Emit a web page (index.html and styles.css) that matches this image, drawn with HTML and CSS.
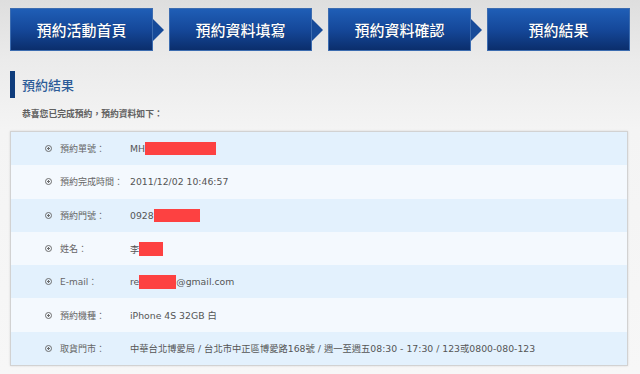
FILE: index.html
```html
<!DOCTYPE html>
<html lang="zh-Hant">
<head>
<meta charset="utf-8">
<title>預約結果</title>
<link rel="stylesheet" href="styles.css">
</head>
<body>
<nav class="steps">
  <div class="step arrow">預約活動首頁</div>
  <div class="step arrow">預約資料填寫</div>
  <div class="step arrow">預約資料確認</div>
  <div class="step">預約結果</div>
</nav>
<h1 class="title">預約結果</h1>
<p class="intro">恭喜您已完成預約，預約資料如下：</p>
<div class="box">
  <div class="row odd"><span class="ico"></span><span class="label">預約單號：</span><span class="value">MH<span class="redact r1"></span></span></div>
  <div class="row even"><span class="ico"></span><span class="label">預約完成時間：</span><span class="value">2011/12/02 10:46:57</span></div>
  <div class="row odd"><span class="ico"></span><span class="label">預約門號：</span><span class="value">0928<span class="redact r3"></span></span></div>
  <div class="row even"><span class="ico"></span><span class="label">姓名：</span><span class="value">李<span class="redact r4"></span></span></div>
  <div class="row odd"><span class="ico"></span><span class="label">E-mail：</span><span class="value">re<span class="redact r5"></span>@gmail.com</span></div>
  <div class="row even"><span class="ico"></span><span class="label">預約機種：</span><span class="value">iPhone 4S 32GB 白</span></div>
  <div class="row odd"><span class="ico"></span><span class="label">取貨門市：</span><span class="value">中華台北博愛局 / 台北市中正區博愛路168號 / 週一至週五08:30 - 17:30 / 123或0800-080-123</span></div>
</div>
</body>
</html>
```
FILE: styles.css
```css
html, body {
  margin: 0;
  padding: 0;
}
body {
  width: 640px;
  height: 374px;
  overflow: hidden;
  background: linear-gradient(#dedede 0px, #ebebeb 60px, #f4f4f4 130px, #f7f7f7 374px);
  font-family: "DejaVu Sans", "Noto Sans CJK TC", sans-serif;
}
.steps {
  display: flex;
  gap: 16px;
  padding: 8px 0 0 10px;
}
.step {
  position: relative;
  width: 143px;
  height: 43px;
  box-sizing: border-box;
  border: 1px solid #3c6cb0;
  background: linear-gradient(#1f5eb6, #15489a 50%, #0b2e6c);
  color: #fff;
  font-family: "Noto Sans CJK TC", sans-serif;
  font-size: 15px;
  font-weight: 500;
  display: flex;
  align-items: center;
  justify-content: center;
  text-shadow: 0 0 1px rgba(0,0,0,0.4);
}
.step.arrow::after {
  content: "";
  position: absolute;
  left: 142px;
  top: 10px;
  border-left: 11px solid #164a99;
  border-top: 11px solid transparent;
  border-bottom: 11px solid transparent;
}
.title {
  margin: 20px 0 0 10px;
  height: 27px;
  border-left: 5px solid #0e3c7c;
  padding-left: 7px;
  font-family: "Noto Sans CJK TC", sans-serif;
  font-size: 13px;
  font-weight: 500;
  color: #2c5b98;
  line-height: 27px;
}
.intro {
  margin: 8px 0 0 22px;
  height: 16px;
  line-height: 16px;
  font-family: "Noto Sans CJK TC", sans-serif;
  font-size: 8.8px;
  font-weight: 700;
  color: #606060;
}
.box {
  margin: 9px 12px 0 10px;
  border: 1px solid #d2d2d2;
  box-shadow: 0 0 2px rgba(0,0,0,0.12);
}
.row {
  height: 33.3px;
  display: flex;
  align-items: center;
  font-size: 9.3px;
  color: #555;
}
.row.odd { background: #e3f1fd; }
.row.even { background: #f4f9fe; }
.ico {
  width: 5px;
  height: 5px;
  margin-left: 34px;
  margin-right: 8px;
  border: 1px solid #6e6e6e;
  border-radius: 50%;
  background: radial-gradient(circle, #6e6e6e 0 1px, transparent 1.3px);
  flex: none;
}
.label {
  width: 70px;
  font-size: 9px;
  color: #666;
  flex: none;
}
.value {
  display: flex;
  align-items: center;
  white-space: nowrap;
}
.redact {
  display: inline-block;
  background: #fd4141;
  height: 13px;
}
.r1 { width: 71px; }
.r3 { width: 46px; }
.r4 { width: 24px; height: 14px; }
.r5 { width: 37px; height: 14px; }
```
